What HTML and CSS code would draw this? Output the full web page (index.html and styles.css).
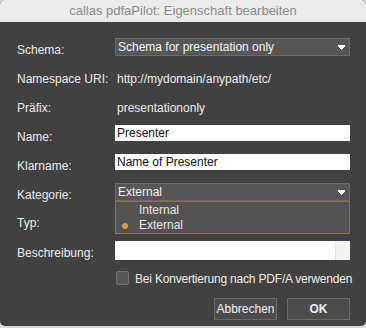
FILE: index.html
```html
<!DOCTYPE html>
<html>
  <head>
    <title>Eigenschaft bearbeiten</title>
    <link rel="stylesheet" href="styles.css">
  </head>
  <body>
    <div class="window">
      <header class="titlebar">callas pdfaPilot: Eigenschaft bearbeiten</header>
      <div class="content">
        <div class="row row-schema">
          <span class="label label-select">Schema:</span>
          <div class="select">
            <span>Schema for presentation only</span>
            <svg class="arrow" width="7" height="5" viewBox="0 0 7 5"><path d="M0 0.5h7M0.5 1.5h6L3.5 4.5z" stroke="#fff" stroke-width="1" fill="#fff"/></svg>
          </div>
        </div>
        <div class="row row-ns">
          <span class="label">Namespace URI:</span>
          <span class="value">http://mydomain/anypath/etc/</span>
        </div>
        <div class="row row-prefix">
          <span class="label">Präfix:</span>
          <span class="value">presentationonly</span>
        </div>
        <div class="row row-name">
          <span class="label label-input">Name:</span>
          <div class="input">Presenter</div>
        </div>
        <div class="row row-klar">
          <span class="label label-input">Klarname:</span>
          <div class="input">Name of Presenter</div>
        </div>
        <div class="row row-kat">
          <span class="label label-select">Kategorie:</span>
          <div class="select">
            <span>External</span>
            <svg class="arrow" width="7" height="5" viewBox="0 0 7 5"><path d="M0 0.5h7M0.5 1.5h6L3.5 4.5z" stroke="#fff" stroke-width="1" fill="#fff"/></svg>
            <ul class="menu">
              <li>Internal</li>
              <li class="checked">External</li>
            </ul>
          </div>
        </div>
        <div class="row row-typ">
          <span class="label">Typ:</span>
        </div>
        <div class="row row-desc">
          <span class="label label-desc">Beschreibung:</span>
          <div class="input textarea"><span class="scroll"></span></div>
        </div>
        <div class="row row-check">
          <span class="label"></span>
          <span class="checkbox"></span>
          <span class="check-text">Bei Konvertierung nach PDF/A verwenden</span>
        </div>
        <div class="row row-buttons">
          <button class="btn btn-cancel">Abbrechen</button>
          <button class="btn btn-ok">OK</button>
        </div>
      </div>
    </div>
  </body>
</html>
```

FILE: styles.css
```css
* {
  box-sizing: border-box;
  margin: 0;
  padding: 0;
}
body {
  background-color: #d9d9d9;
  font-family: "Liberation Sans", Arial, sans-serif;
  font-size: 12px;
  width: 366px;
  height: 328px;
  overflow: hidden;
}
.window {
  width: 366px;
  height: 326px;
  border-radius: 5px;
  overflow: hidden;
  background-color: #414141;
  display: flex;
  flex-direction: column;
}
.titlebar {
  height: 22px;
  background-color: #ebebeb;
  color: #8c8c8c;
  text-align: center;
  line-height: 22px;
  font-size: 13px;
}
.content {
  padding: 0 16px 0 17px;
  color: #ececec;
  white-space: nowrap;
}
.row {
  display: flex;
  align-items: center;
  line-height: 16px;
}
.label {
  width: 98px;
  flex-shrink: 0;
}
.label-select {
  padding-top: 5px;
}
.label-input {
  padding-top: 7px;
}
.label-desc {
  padding-top: 4px;
}
.value {
  padding-left: 2px;
}
.row-schema { margin-top: 16px; height: 18px; }
.row-ns { margin-top: 15px; height: 16px; }
.row-prefix { margin-top: 13px; height: 16px; }
.row-name { margin-top: 9px; height: 16px; }
.row-klar { margin-top: 13px; height: 16px; }
.row-kat { margin-top: 13px; height: 18px; }
.row-typ { margin-top: 14px; height: 16px; }
.row-desc { margin-top: 10px; height: 19px; }
.row-check { margin-top: 11px; height: 14px; }
.row-buttons {
  margin-top: 13px;
  height: 22px;
  justify-content: flex-end;
  gap: 10px;
}
.select {
  position: relative;
  flex: 1;
  height: 18px;
  background-color: #565656;
  border: 1px solid #6b6b6b;
  color: #f4f4f4;
  padding-left: 2px;
  display: flex;
  align-items: center;
}
.arrow {
  margin-left: auto;
  margin-right: 4px;
}
.input {
  flex: 1;
  height: 16px;
  background-color: #ffffff;
  color: #111111;
  padding-left: 2px;
  line-height: 16px;
}
.textarea {
  height: 19px;
  display: flex;
  justify-content: flex-end;
}
.scroll {
  width: 15px;
  background-color: #f3f3f3;
  border-left: 1px solid #e6e6e6;
}
.menu {
  position: absolute;
  left: -1px;
  right: -1px;
  top: 17px;
  height: 33px;
  list-style: none;
  background-color: #535353;
  border: 1px solid #9a7233;
  padding-top: 1px;
  color: #e6e6e6;
  line-height: 15px;
}
.menu li {
  padding-left: 23px;
  position: relative;
}
.menu li.checked::before {
  content: "";
  position: absolute;
  left: 6px;
  top: 5px;
  width: 6px;
  height: 6px;
  border-radius: 50%;
  background-color: #e8982f;
}
.checkbox {
  flex-shrink: 0;
  width: 13px;
  height: 14px;
  background-color: #575757;
  border: 1px solid #6e6e6e;
  border-radius: 2px;
  margin-left: 1px;
  margin-right: 6px;
}
.check-text {
  padding-top: 1px;
  letter-spacing: -0.2px;
}
.btn {
  width: 63px;
  height: 22px;
  background-color: #4b4b4b;
  border: 1px solid #6a6a6a;
  color: #f2f2f2;
  font-family: "Liberation Sans", Arial, sans-serif;
  font-size: 12px;
}
.btn-ok {
  font-weight: bold;
}
```
